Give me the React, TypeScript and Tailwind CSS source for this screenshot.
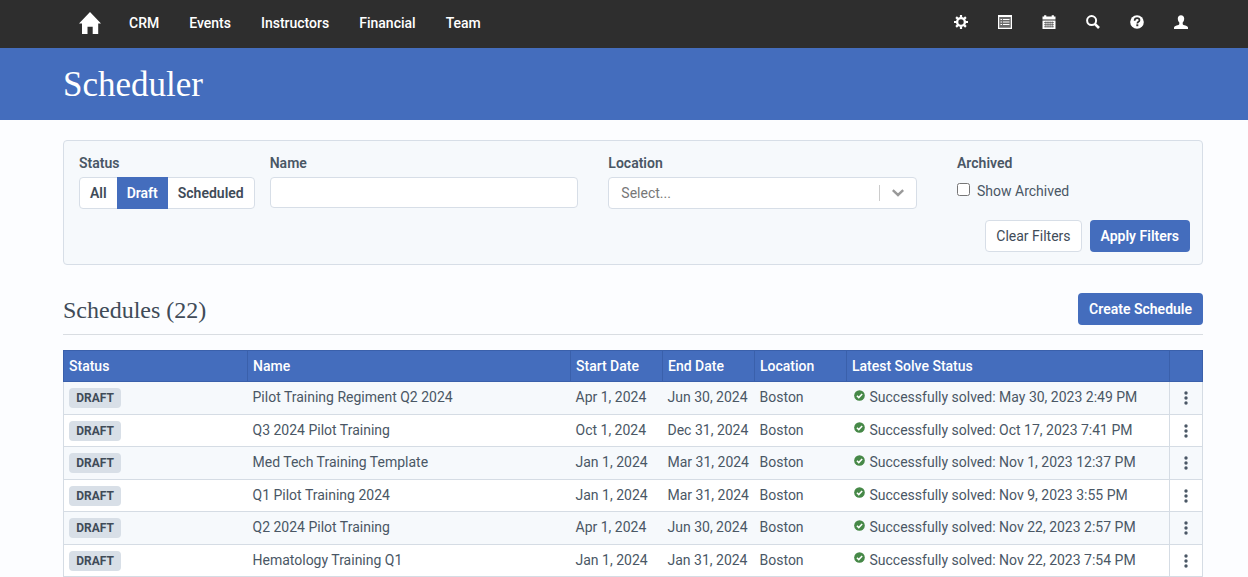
import { useState } from 'react'
import type { ReactNode } from 'react'

interface Schedule {
  name: string
  start: string
  end: string
  location: string
  solved: string
}

const schedules: Schedule[] = [
  { name: 'Pilot Training Regiment Q2 2024', start: 'Apr 1, 2024', end: 'Jun 30, 2024', location: 'Boston', solved: 'May 30, 2023 2:49 PM' },
  { name: 'Q3 2024 Pilot Training',          start: 'Oct 1, 2024', end: 'Dec 31, 2024', location: 'Boston', solved: 'Oct 17, 2023 7:41 PM' },
  { name: 'Med Tech Training Template',      start: 'Jan 1, 2024', end: 'Mar 31, 2024', location: 'Boston', solved: 'Nov 1, 2023 12:37 PM' },
  { name: 'Q1 Pilot Training 2024',          start: 'Jan 1, 2024', end: 'Mar 31, 2024', location: 'Boston', solved: 'Nov 9, 2023 3:55 PM' },
  { name: 'Q2 2024 Pilot Training',          start: 'Apr 1, 2024', end: 'Jun 30, 2024', location: 'Boston', solved: 'Nov 22, 2023 2:57 PM' },
  { name: 'Hematology Training Q1',          start: 'Jan 1, 2024', end: 'Jan 31, 2024', location: 'Boston', solved: 'Nov 22, 2023 7:54 PM' },
]

const navLinks = ['CRM', 'Events', 'Instructors', 'Financial', 'Team']
const statuses = ['All', 'Draft', 'Scheduled']

const tools: { label: string; icon: ReactNode }[] = [
  {
    label: 'Settings',
    icon: (
      <>
        <circle cx="7" cy="7" r="3.9" fill="none" stroke="currentColor" strokeWidth="2.4" />
        <path
          d="M7 0v2.6M7 11.4V14M0 7h2.6M11.4 7H14M2.1 2.1l1.8 1.8M10.1 10.1l1.8 1.8M2.1 11.9l1.8-1.8M10.1 3.9l1.8-1.8"
          stroke="currentColor"
          strokeWidth="2.2"
        />
      </>
    ),
  },
  {
    label: 'Lists',
    icon: (
      <>
        <path d="M.6.6h12.8v12.8H.6z" fill="#6a6a6a" stroke="currentColor" strokeWidth="1.2" />
        <path d="M1 1.2h12" stroke="currentColor" strokeWidth="1.6" />
        <path d="M2.5 4.5h1.6M5 4.5h6.5M2.5 7h1.6M5 7h6.5M2.5 9.5h1.6M5 9.5h6.5" stroke="currentColor" strokeWidth="1" />
      </>
    ),
  },
  {
    label: 'Calendar',
    icon: (
      <>
        <path d="M.5 1.5h1.6V.2h2.2v1.3h5.4V.2h2.2v1.3h1.6v3H.5z" />
        <path d="M.5 5.5h13V14H.5z" />
        <path d="M2 7.6h10M2 9.7h10M2 11.8h10M3.9 6.4v6M6 6.4v6M8.1 6.4v6M10.2 6.4v6" stroke="#2e2e2e" strokeWidth=".6" />
      </>
    ),
  },
  {
    label: 'Search',
    icon: (
      <>
        <circle cx="5.6" cy="5.6" r="4.5" fill="none" stroke="currentColor" strokeWidth="2" />
        <path d="M8.8 8.8l4.2 4.2" stroke="currentColor" strokeWidth="2.6" />
      </>
    ),
  },
  {
    label: 'Help',
    icon: (
      <>
        <circle cx="7" cy="7" r="6.8" />
        <path d="M4.6 5.7C4.6 4 5.6 3.2 7.1 3.2s2.4.8 2.4 2c0 1.6-2.2 1.6-2.2 3.3" fill="none" stroke="#2e2e2e" strokeWidth="1.7" />
        <path d="M6.3 9.3h2v1.9h-2z" fill="#2e2e2e" />
      </>
    ),
  },
  {
    label: 'Account',
    icon: <path d="M7 .2c2 0 3.2 1.3 3.2 3.4 0 1.9-.7 3.2-1.5 4v1.3c0 .7 1.3 1.1 2.8 1.7 1.6.6 2.5 1.1 2.5 2.2V14H0v-1.2c0-1.1.9-1.6 2.5-2.2 1.5-.6 2.8-1 2.8-1.7V7.6c-.8-.8-1.5-2.1-1.5-4C3.8 1.5 5 .2 7 .2z" />,
  },
]

function Badge({ children }: { children: ReactNode }) {
  return (
    <span className="block w-[52px] rounded bg-[#d8dfe7] text-center text-xs font-bold leading-5 text-[#404b58]">{children}</span>
  )
}

function SolvedIcon() {
  return (
    <svg viewBox="0 0 12 12" className="mb-1 h-[11px] w-[11px] shrink-0" aria-hidden="true">
      <circle cx="6" cy="6" r="5.8" fill="#468847" />
      <path d="M3.2 6.2l2 2 3.7-3.9" fill="none" stroke="#fff" strokeWidth="1.7" />
    </svg>
  )
}

export default function App() {
  const [status, setStatus] = useState('Draft')
  const [name, setName] = useState('')
  const [archived, setArchived] = useState(false)

  const clearFilters = () => {
    setStatus('All')
    setName('')
    setArchived(false)
  }

  return (
    <div className="h-screen overflow-hidden bg-[#fcfdff] font-['Roboto',sans-serif] text-sm text-[#4a5765]">
      <nav className="flex h-12 items-center bg-[#2e2e2e] pb-0.5 pl-[79px] pr-[60px] font-medium text-white">
        <a href="#" aria-label="Home" className="mr-7">
          <svg viewBox="0 0 22 22" className="h-[22px] w-[22px] fill-white" aria-hidden="true">
            <path d="M11 0L22 11.5h-2.8V22h-5.5v-7.3H8.5V22H3V11.5H0z" />
          </svg>
        </a>
        <div className="flex gap-[30px]">
          {navLinks.map(link => <a key={link} href="#">{link}</a>)}
        </div>
        <div className="mb-0.5 ml-auto flex gap-[30px]">
          {tools.map(tool => (
            <button key={tool.label} aria-label={tool.label}>
              <svg viewBox="0 0 14 14" className="h-[14px] w-[14px] fill-current" aria-hidden="true">{tool.icon}</svg>
            </button>
          ))}
        </div>
      </nav>

      <header className="flex h-[72px] items-center bg-[#446dbd] pl-[63px] pt-0.5">
        <h1 className="font-['Roboto_Slab','Liberation_Serif',serif] text-[35px] font-light text-white">Scheduler</h1>
      </header>

      <main className="pl-[63px] pr-[45px] pt-5">
        {/* Filters */}
        <form
          className="rounded border border-[#d7dee7] bg-[#f6f9fc] pb-3 pl-[15px] pr-3 pt-3"
          onSubmit={e => e.preventDefault()}
        >
          <div className="flex items-start">
            <fieldset className="mr-[15px]">
              <legend className="font-semibold">Status</legend>
              <div className="mt-1 flex h-8 rounded border border-[#d7dee7] bg-white font-semibold text-[#404b58]">
                {statuses.map(s => (
                  <button
                    key={s}
                    type="button"
                    aria-pressed={s === status}
                    onClick={() => setStatus(s)}
                    className={s === status ? '-my-px bg-[#446dbd] px-[10px] text-white' : 'px-[10px]'}
                  >
                    {s}
                  </button>
                ))}
              </div>
            </fieldset>
            <div className="mr-[30px] flex-1">
              <label htmlFor="name" className="block font-semibold">Name</label>
              <input
                id="name"
                value={name}
                onChange={e => setName(e.target.value)}
                className="mt-1 block h-[31px] w-full rounded border border-[#d7dee7] bg-white px-2"
              />
            </div>
            <div className="mr-10 flex-1">
              <label htmlFor="location" className="block font-semibold">Location</label>
              <div className="relative mt-1">
                <select
                  id="location"
                  defaultValue=""
                  className="block h-8 w-full appearance-none rounded border border-[#d7dee7] bg-white px-3 text-[#777]"
                >
                  <option value="">Select...</option>
                  <option>Boston</option>
                </select>
                <div className="pointer-events-none absolute inset-y-2 right-0 flex w-[38px] items-center justify-center border-l border-[#ccc] pr-0.5">
                  <svg viewBox="0 0 12 8" className="h-2 w-3" fill="none" stroke="#999" strokeWidth="2.4" aria-hidden="true">
                    <path d="M.8 1.2L6 6l5.2-4.8" />
                  </svg>
                </div>
              </div>
            </div>
            <fieldset className="w-[233px]">
              <legend className="font-semibold">Archived</legend>
              <label className="mt-2 flex items-center gap-[7px]">
                <input
                  type="checkbox"
                  checked={archived}
                  onChange={e => setArchived(e.target.checked)}
                  className="mb-1 h-[13px] w-[13px]"
                />
                Show Archived
              </label>
            </fieldset>
          </div>
          <div className="mt-[11px] flex justify-end gap-2">
            <button
              type="button"
              onClick={clearFilters}
              className="h-8 rounded border border-[#d7dee7] bg-white px-[10px] text-[#404b58]"
            >
              Clear Filters
            </button>
            <button type="submit" className="h-8 rounded bg-[#446dbd] px-[11px] font-semibold text-white">Apply Filters</button>
          </div>
        </form>

        <div className="mt-7 flex h-[42px] items-start justify-between border-b border-[#d9dde2]">
          <h2 className="font-['Roboto_Slab','Liberation_Serif',serif] text-2xl font-light leading-[34px] text-[#404b58]">Schedules (22)</h2>
          <button className="h-8 rounded bg-[#446dbd] px-[11px] font-semibold text-white">Create Schedule</button>
        </div>

        {/* Schedule list */}
        <table className="mt-[15px] w-full table-fixed border-collapse text-left">
          <colgroup>
            <col className="w-[184px]" />
            <col />
            <col className="w-[92px]" />
            <col className="w-[92px]" />
            <col className="w-[92px]" />
            <col className="w-[323px]" />
            <col className="w-[33px]" />
          </colgroup>
          <thead>
            <tr className="h-[31px] bg-[#446dbd] text-white">
              {['Status', 'Name', 'Start Date', 'End Date', 'Location', 'Latest Solve Status', ''].map((title, i) => (
                <th key={i} className="border border-[#3a60ab] px-[5px] font-medium">{title}</th>
              ))}
            </tr>
          </thead>
          <tbody>
            {schedules.map(row => (
              <tr key={row.name} className="h-[33px] whitespace-nowrap border border-[#d5dce4] bg-white odd:bg-[#f6f9fc] even:h-8">
                <td className="px-[5px]"><Badge>DRAFT</Badge></td>
                <td className="px-[5px] pb-0.5">{row.name}</td>
                <td className="px-[5px] pb-0.5">{row.start}</td>
                <td className="px-[5px] pb-0.5">{row.end}</td>
                <td className="px-[5px] pb-0.5">{row.location}</td>
                <td className="px-[7px] pb-0.5">
                  <div className="flex items-center gap-[5px]">
                    <SolvedIcon />
                    Successfully solved: {row.solved}
                  </div>
                </td>
                <td className="border-l border-[#d5dce4] text-center">
                  <button aria-label={`Actions for ${row.name}`} className="block w-full">
                    <svg viewBox="0 0 4 14" className="mx-auto h-[14px] w-1 fill-[#4a5765]" aria-hidden="true">
                      <circle cx="2" cy="2" r="1.7" />
                      <circle cx="2" cy="7" r="1.7" />
                      <circle cx="2" cy="12" r="1.7" />
                    </svg>
                  </button>
                </td>
              </tr>
            ))}
          </tbody>
        </table>
      </main>
    </div>
  )
}
